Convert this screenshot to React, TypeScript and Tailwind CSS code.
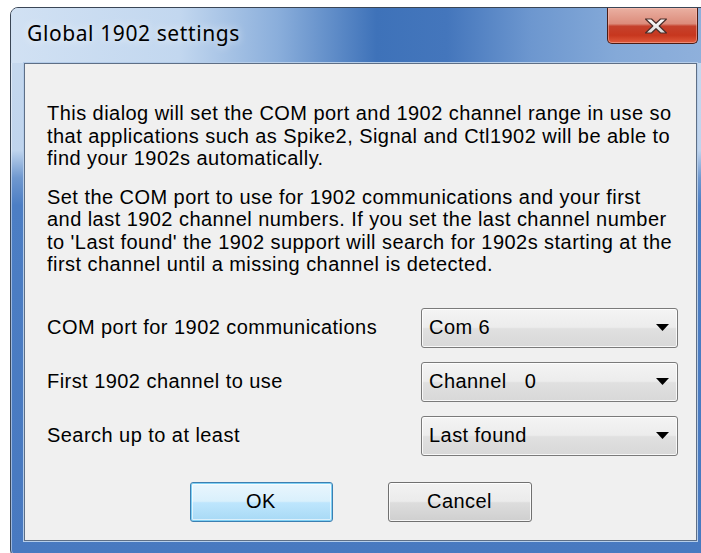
const body = "font-['Liberation_Sans',Arial,sans-serif] text-[20px] leading-[22.5px] tracking-[0.45px] text-black whitespace-nowrap";

function CloseGlyph() {
  return (
    <svg width="24" height="16" viewBox="0 0 24 16">
      <defs>
        <linearGradient id="xg" x1="0" y1="0" x2="0" y2="1">
          <stop offset="0" stopColor="#ffffff" />
          <stop offset="1" stopColor="#d9d9d9" />
        </linearGradient>
      </defs>
      <polygon
        points="1.5,1 7.5,1 12,5.3 16.5,1 22.5,1 15.2,8 22.5,15 16.5,15 12,10.7 7.5,15 1.5,15 8.8,8"
        fill="url(#xg)"
        stroke="#4a2e2a"
        strokeWidth="1.2"
        strokeLinejoin="round"
      />
    </svg>
  );
}

function Combo({ value }: { value: string }) {
  return (
    <div className="flex h-[40px] w-[257px] items-center justify-between rounded-[3px] border border-[#7a7a7a] bg-[linear-gradient(to_bottom,#f4f4f4_0%,#ececec_48%,#e0e0e0_52%,#d8d8d8_100%)] pl-[7px] pr-[8px] shadow-[inset_0_0_0_1px_rgba(255,255,255,0.8)]">
      <span className={`${body} whitespace-pre`}>{value}</span>
      <svg width="13" height="7" viewBox="0 0 13 7">
        <polygon points="0,0 13,0 6.5,7" fill="#000" />
      </svg>
    </div>
  );
}

function PushButton({ label, primary }: { label: string; primary?: boolean }) {
  return (
    <button
      className={
        primary
          ? "flex h-[40px] w-[143px] items-center justify-center rounded-[3px] border border-[#3c7fb1] bg-[linear-gradient(to_bottom,#eaf6fd_0%,#d9f0fc_48%,#bee6fd_52%,#a7d9f5_100%)] shadow-[inset_0_0_0_1px_#7fd0f4,inset_0_0_0_2px_rgba(255,255,255,0.6)]"
          : "flex h-[40px] w-[144px] items-center justify-center rounded-[3px] border border-[#707070] bg-[linear-gradient(to_bottom,#f2f2f2_0%,#ebebeb_48%,#dddddd_52%,#cfcfcf_100%)] shadow-[inset_0_0_0_1px_rgba(255,255,255,0.8)]"
      }
    >
      <span className={body}>{label}</span>
    </button>
  );
}

export default function App() {
  return (
    <div className="h-[553px] w-[701px] overflow-hidden bg-white">
      {/* window frame, runs off the right edge */}
      <div className="ml-[10px] mt-[7px] flex h-[550px] w-[705px] flex-col overflow-hidden rounded-t-[8px] rounded-b-[7px] border border-[#3a4656] bg-[linear-gradient(to_bottom,#c9dbef_0%,#bfd4ed_26%,#6f98cf_31%,#4c7ec4_36%,#4879c0_100%)] shadow-[inset_0_0_0_1px_rgba(255,255,255,0.45)]">
        {/* caption */}
        <div className="flex h-[55px] shrink-0 items-start bg-[linear-gradient(to_right,#d1e1f3_0%,#c2d7ef_24%,#8aaedb_38%,#3e72b9_52%,#4476bc_62%,#6d97cf_74%,#84a9d8_86%,#90b1dc_100%)]">
          <span className="ml-[16px] mt-[13px] font-['Noto_Sans','Open_Sans',sans-serif] text-[21px] leading-[24px] tracking-[0.6px] text-black [text-shadow:0_0_8px_rgba(255,255,255,0.9)]">
            Global 1902 settings
          </span>
          <div className="ml-auto mr-[16px] flex h-[36px] w-[91px] items-center justify-center rounded-b-[5px] border border-t-0 border-[#4b1c14] bg-[linear-gradient(to_bottom,#eab0a2_0%,#dc8c7b_45%,#c5412c_52%,#c7371e_78%,#e05a3c_100%)] shadow-[inset_0_0_0_1px_rgba(255,200,190,0.45)]">
            <span className="ml-[6px]">
              <CloseGlyph />
            </span>
          </div>
        </div>

        {/* client area */}
        <div className="ml-[13px] flex h-[478px] w-[673px] shrink-0 flex-col border border-[#5e6f86] bg-[#f0f0f0] px-[22px] pt-[38px] shadow-[0_0_0_1px_#b5cdea]">
          <p className={body}>
            This dialog will set the COM port and 1902 channel range in use so
            <br />
            that applications such as Spike2, Signal and Ctl1902 will be able to
            <br />
            find your 1902s automatically.
          </p>
          <p className={`${body} mt-[16px]`}>
            Set the COM port to use for 1902 communications and your first
            <br />
            and last 1902 channel numbers. If you set the last channel number
            <br />
            to 'Last found' the 1902 support will search for 1902s starting at the
            <br />
            first channel until a missing channel is detected.
          </p>

          <div className="mt-[32px] flex flex-col gap-[14px]">
            <div className="grid grid-cols-[374px_257px] items-center">
              <span className={body}>COM port for 1902 communications</span>
              <Combo value="Com 6" />
            </div>
            <div className="grid grid-cols-[374px_257px] items-center">
              <span className={body}>First 1902 channel to use</span>
              <Combo value="Channel   0" />
            </div>
            <div className="grid grid-cols-[374px_257px] items-center">
              <span className={body}>Search up to at least</span>
              <Combo value="Last found" />
            </div>
          </div>

          <div className="mt-[26px] flex justify-center gap-[55px]">
            <PushButton label="OK" primary />
            <PushButton label="Cancel" />
          </div>
        </div>
      </div>
    </div>
  );
}
